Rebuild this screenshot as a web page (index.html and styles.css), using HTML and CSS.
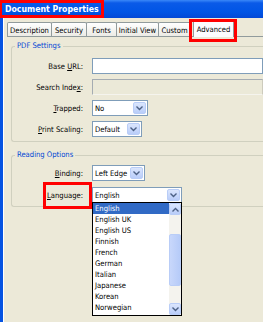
FILE: index.html
```html
<!DOCTYPE html>
<html>
<head>
<meta charset="utf-8">
<link rel="stylesheet" href="styles.css">
</head>
<body>
<div class="win">
  <div class="titlebar"><span class="title">Document Properties</span></div>
  <div class="frame">
    <div class="tabs">
      <span class="tab t1">Description</span>
      <span class="tab t2">Security</span>
      <span class="tab t3">Fonts</span>
      <span class="tab t4">Initial View</span>
      <span class="tab t5">Custom</span>
      <span class="tab active">Advanced</span>
    </div>
    <div class="panel">
      <div class="group g1">
        <div class="legend">PDF Settings</div>
        <div class="row"><label>Base <u>U</u>RL:</label><span class="input"></span></div>
        <div class="row"><label>Search Inde<u>x</u>:</label><span class="input disabled"></span></div>
        <div class="row"><label><u>T</u>rapped:</label><span class="select w56"><span class="val">No</span><span class="btn"><svg width="7" height="5" viewBox="0 0 7 5"><path d="M0.5 0.5 L3.5 3.5 L6.5 0.5" fill="none" stroke="#4d6185" stroke-width="1.4"/></svg></span></span></div>
        <div class="row"><label><u>P</u>rint Scaling:</label><span class="select w50"><span class="val">Default</span><span class="btn"><svg width="7" height="5" viewBox="0 0 7 5"><path d="M0.5 0.5 L3.5 3.5 L6.5 0.5" fill="none" stroke="#4d6185" stroke-width="1.4"/></svg></span></span></div>
      </div>
      <div class="group g2">
        <div class="legend">Reading Options</div>
        <div class="row"><label><u>B</u>inding:</label><span class="select w53"><span class="val">Left Edge</span><span class="btn"><svg width="7" height="5" viewBox="0 0 7 5"><path d="M0.5 0.5 L3.5 3.5 L6.5 0.5" fill="none" stroke="#4d6185" stroke-width="1.4"/></svg></span></span></div>
        <div class="row"><label class="langlab"><u>L</u>anguage:</label><span class="select w90"><span class="val">English</span><span class="btn"><svg width="7" height="5" viewBox="0 0 7 5"><path d="M0.5 0.5 L3.5 3.5 L6.5 0.5" fill="none" stroke="#4d6185" stroke-width="1.4"/></svg></span>
          <div class="list">
            <ul>
              <li class="sel">English</li>
              <li>English UK</li>
              <li>English US</li>
              <li>Finnish</li>
              <li>French</li>
              <li>German</li>
              <li>Italian</li>
              <li>Japanese</li>
              <li>Korean</li>
              <li>Norwegian</li>
            </ul>
            <div class="sb">
              <span class="sbtn"><svg width="7" height="5" viewBox="0 0 7 5"><path d="M0.5 4.5 L3.5 1.5 L6.5 4.5" fill="none" stroke="#4d6185" stroke-width="1.4"/></svg></span>
              <span class="track"><span class="thumb"></span></span>
              <span class="sbtn"><svg width="7" height="5" viewBox="0 0 7 5"><path d="M0.5 0.5 L3.5 3.5 L6.5 0.5" fill="none" stroke="#4d6185" stroke-width="1.4"/></svg></span>
            </div>
          </div>
        </span></div>
      </div>
    </div>
  </div>
</div>
</body>
</html>
```

FILE: styles.css
```css
html, body {
  margin: 0;
  padding: 0;
  width: 263px;
  height: 322px;
  overflow: hidden;
  background: #ece9d8;
  font-family: "DejaVu Sans Condensed", "Liberation Sans", Arial, sans-serif;
  font-size: 7.6px;
  color: #000;
}
.win {
  display: flex;
  flex-direction: column;
  height: 322px;
}
.titlebar {
  height: 18px;
  background: linear-gradient(#3a88f8 0, #0a5ae8 3px, #0055e5 12px, #0348d6 18px);
  display: flex;
  align-items: stretch;
}
.title {
  position: relative;
  color: #fff;
  font-weight: bold;
  font-size: 8.7px;
  width: 104px;
  box-sizing: border-box;
  padding: 0 0 0 3px;
  display: flex;
  align-items: center;
  white-space: nowrap;
  border: 3px solid #ff0000;
  border-left-width: 2px;
}
.frame {
  flex: 1;
  border-left: 3px solid #0553e2;
  box-shadow: inset 1px 0 0 #fff;
  padding-left: 4px;
  display: flex;
  flex-direction: column;
}
.tabs {
  display: flex;
  align-items: flex-end;
  height: 18px;
  position: relative;
  z-index: 1;
}
.tab {
  flex: none;
  height: 14px;
  border: 1px solid #919b9c;
  border-bottom: none;
  border-radius: 2px 2px 0 0;
  background: linear-gradient(#fff, #ecebe5);
  box-sizing: border-box;
  display: flex;
  align-items: center;
  justify-content: center;
  margin-right: -1px;
  white-space: nowrap;
  padding-top: 1px;
}
.t1 { width: 45px; }
.t2 { width: 36px; }
.t3 { width: 31px; }
.t4 { width: 43px; }
.t5 { width: 33px; }
.tab.active {
  position: relative;
  width: 41px;
  height: 17px;
  margin-left: 3px;
  margin-bottom: -1px;
  background: #fcfcfe;
  border-top: 2px solid #f5a92a;
  padding-top: 0;
}
.tab.active::after {
  content: "";
  position: absolute;
  left: -5px;
  right: -4px;
  top: -3px;
  bottom: -5px;
  border: 3px solid #ff0000;
}
.panel {
  flex: 1;
  border-top: 1px solid #919b9c;
  padding: 4px 0 0 4px;
  display: flex;
  flex-direction: column;
}
.group {
  position: relative;
  border: 1px solid #d0d0bf;
  border-right: none;
  border-radius: 3px 0 0 3px;
  box-sizing: border-box;
  display: flex;
  flex-direction: column;
}
.g1 {
  margin-top: 5px;
  height: 96px;
  padding-top: 11px;
  gap: 5px;
}
.g2 {
  margin-top: 13px;
  height: 52px;
  padding-top: 9px;
  gap: 6px;
}
.legend {
  position: absolute;
  top: -6px;
  left: 3px;
  padding: 0 2px;
  background: #ece9d8;
  color: #0046d5;
  line-height: 10px;
}
.row {
  display: flex;
  align-items: center;
  height: 16px;
  flex: none;
}
.row label {
  width: 71px;
  text-align: right;
  padding-right: 9px;
  white-space: nowrap;
}
.row label.langlab {
  position: relative;
  height: 27px;
  width: 40px;
  margin-left: 31px;
  flex: none;
  display: flex;
  align-items: center;
  justify-content: flex-end;
  box-sizing: content-box;
}
.langlab::after {
  content: "";
  position: absolute;
  inset: 0;
  border: 3px solid #ff0000;
}
.input {
  flex: 1;
  height: 16px;
  box-sizing: border-box;
  border: 1px solid #7f9db9;
  background: #fff;
}
.input.disabled {
  background: #ebe9d8;
  border-color: #a5acb2 #cdcbbd #f5f4ee #a5acb2;
}
.select {
  position: relative;
  height: 16px;
  box-sizing: border-box;
  border: 1px solid #7f9db9;
  background: #fff;
  display: flex;
  align-items: center;
  flex: none;
}
.w56 { width: 56px; }
.w50 { width: 50px; }
.w53 { width: 53px; }
.w90 { width: 90px; }
.val {
  flex: 1;
  padding-left: 2px;
  white-space: nowrap;
  overflow: hidden;
}
.btn, .sbtn {
  width: 13px;
  height: 12px;
  margin-right: 1px;
  border: 1px solid #b9cdf7;
  border-radius: 2px;
  background: linear-gradient(#dbe6fd, #b9cdf9);
  box-sizing: border-box;
  display: flex;
  align-items: center;
  justify-content: center;
  flex: none;
}
.list {
  position: absolute;
  left: -1px;
  top: 14px;
  width: 90px;
  height: 114px;
  box-sizing: border-box;
  border: 1px solid #000;
  background: #fff;
  display: flex;
  z-index: 5;
}
.list ul {
  list-style: none;
  margin: 0;
  padding: 0;
  flex: 1;
}
.list li {
  height: 11px;
  line-height: 11px;
  padding-left: 2px;
}
.list li.sel {
  background: #316ac5;
  color: #fff;
}
.sb {
  width: 12px;
  display: flex;
  flex-direction: column;
  background: #f4f3ee;
}
.sbtn {
  width: 12px;
  height: 12px;
  margin: 0;
}
.track {
  flex: 1;
  padding-top: 19px;
  display: flex;
  flex-direction: column;
}
.thumb {
  height: 50px;
  border: 1px solid #b9cdf7;
  border-radius: 2px;
  background: linear-gradient(90deg, #c8d7fb, #b6cbf8);
}
```
